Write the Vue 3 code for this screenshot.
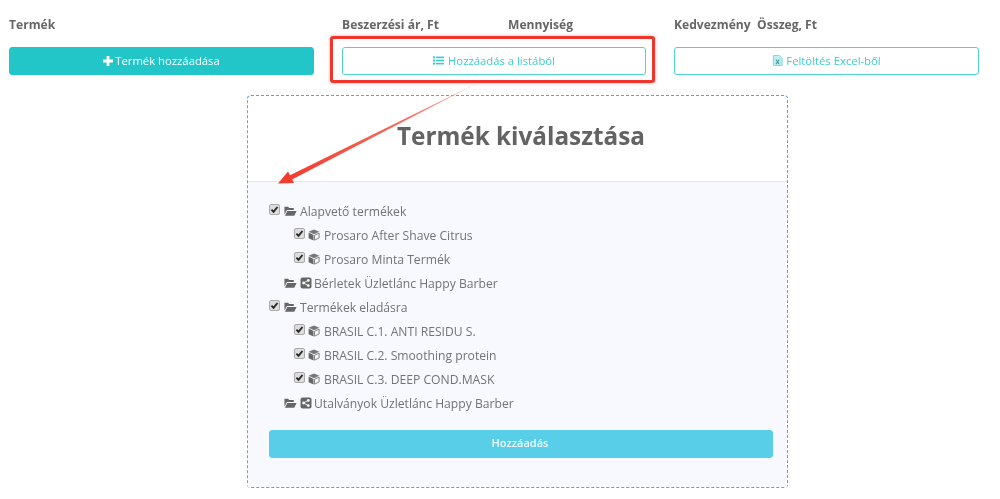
<template>
  <div class="page">
    <div class="columns">
      <div class="col col-product">
        <div class="col-title">Termék</div>
        <button class="btn btn-solid">
          <svg class="ico ico-plus" viewBox="1 1 10 10"><path d="M4.6 1h2.8v3.6H11v2.8H7.4V11H4.6V7.4H1V4.6h3.6z" fill="currentColor" /></svg>
          Termék hozzáadása
        </button>
      </div>
      <div class="col col-list">
        <div class="col-titles">
          <span class="col-title price">Beszerzési ár, Ft</span>
          <span class="col-title">Mennyiség</span>
        </div>
        <div class="highlight">
          <button class="btn btn-outline btn-list">
            <svg class="ico" viewBox="0 0 12 12" fill="currentColor">
              <rect x="0" y="1.5" width="2.2" height="2.2" /><rect x="3.2" y="1.7" width="8.8" height="1.8" />
              <rect x="0" y="4.9" width="2.2" height="2.2" /><rect x="3.2" y="5.1" width="8.8" height="1.8" />
              <rect x="0" y="8.3" width="2.2" height="2.2" /><rect x="3.2" y="8.5" width="8.8" height="1.8" />
            </svg>
            Hozzáadás a listából
          </button>
        </div>
      </div>
      <div class="col col-excel">
        <div class="col-titles">
          <span class="col-title discount">Kedvezmény</span>
          <span class="col-title">Összeg, Ft</span>
        </div>
        <button class="btn btn-outline">
          <svg class="ico" viewBox="1 0 11 12">
            <path d="M2 .5h6.5L11.5 3.5v8H2z" fill="#c4eeee" stroke="#6fd8da" stroke-width="1" />
            <path d="M4.8 5l3.6 5M8.4 5L4.8 10" stroke="#3f9f9f" stroke-width="1.1" fill="none" />
          </svg>
          Feltöltés Excel-ből
        </button>
      </div>
    </div>

    <div class="dialog">
      <h1 class="dialog-title">Termék kiválasztása</h1>
      <div class="dialog-body">
        <ul class="tree">
          <li
            v-for="row in rows"
            :key="row.label"
            class="tree-row"
            :class="'level-' + row.level"
          >
            <span v-if="row.checked" class="check">
              <svg viewBox="0 0 10 10"><path d="M1.6 5.2l2.3 2.4 4.4-5.4" fill="none" stroke="#222" stroke-width="2" /></svg>
            </span>
            <svg v-if="row.type === 'group' || row.type === 'share'" class="folder" viewBox="0 0 14 12">
              <path d="M0.5 10V1.5h4l1 1.3h5V5H3L0.5 10z" fill="#666" />
              <path d="M3.6 6h10l-2.6 5H1z" fill="#666" />
            </svg>
            <svg v-if="row.type === 'share'" class="share" viewBox="0 0 12 12">
              <rect x="0.5" y="0.5" width="11" height="11" rx="2" fill="#666" />
              <circle cx="8.3" cy="3.4" r="1.4" fill="#f8f9fe" /><circle cx="8.3" cy="8.6" r="1.4" fill="#f8f9fe" /><circle cx="3.6" cy="6" r="1.4" fill="#f8f9fe" />
              <path d="M8.3 3.4L3.6 6l4.7 2.6" fill="none" stroke="#f8f9fe" stroke-width="0.9" />
            </svg>
            <svg v-if="row.type === 'item'" class="cube" viewBox="0 0 12 12">
              <path d="M6 .4l5.4 2.4L6 5.2.6 2.8z" fill="#777" />
              <path d="M.6 3.6l4.9 2.3v5.7L.6 9.2z" fill="#666" />
              <path d="M6.5 6.3l4.6-2.2v4.9l-4.6 2.2z" fill="#f4f5f9" stroke="#777" stroke-width="0.9" />
            </svg>
            <span class="label">{{ row.label }}</span>
          </li>
        </ul>
        <button class="btn btn-add">Hozzáadás</button>
      </div>
    </div>

    <svg class="arrow" viewBox="0 0 1000 499">
      <defs>
        <linearGradient id="arrowFade" gradientUnits="userSpaceOnUse" x1="477" y1="83" x2="290" y2="177">
          <stop offset="0" stop-color="#f9b4ac" />
          <stop offset="0.35" stop-color="#f66f62" />
          <stop offset="1" stop-color="#f33c2e" />
        </linearGradient>
      </defs>
      <path d="M477 83.2L289.5 175.5L292 179.5z" fill="url(#arrowFade)" />
      <path d="M278 183.5L288 171.5L294 183z" fill="#f33c2e" />
    </svg>
  </div>
</template>

<script setup>
const rows = [
  { label: 'Alapvető termékek', level: 0, type: 'group', checked: true },
  { label: 'Prosaro After Shave Citrus', level: 1, type: 'item', checked: true },
  { label: 'Prosaro Minta Termék', level: 1, type: 'item', checked: true },
  { label: 'Bérletek Üzletlánc Happy Barber', level: 2, type: 'share', checked: false },
  { label: 'Termékek eladásra', level: 0, type: 'group', checked: true },
  { label: 'BRASIL C.1. ANTI RESIDU S.', level: 1, type: 'item', checked: true },
  { label: 'BRASIL C.2. Smoothing protein', level: 1, type: 'item', checked: true },
  { label: 'BRASIL C.3. DEEP COND.MASK', level: 1, type: 'item', checked: true },
  { label: 'Utalványok Üzletlánc Happy Barber', level: 2, type: 'share', checked: false }
]
</script>

<style>
html, body {
  margin: 0;
  background: #fff;
  overflow: hidden;
}
</style>

<style scoped>
.page {
  position: relative;
  width: 1000px;
  height: 499px;
  overflow: hidden;
  font-family: "Open Sans", sans-serif;
  color: #666;
  filter: blur(0.35px);
}

.columns {
  display: flex;
  padding: 18px 0 0 9px;
  height: 78px;
  box-sizing: border-box;
}

.col {
  display: flex;
  flex-direction: column;
}

.col-product {
  width: 305px;
  margin-right: 28px;
}

.col-list {
  width: 304px;
  margin-right: 28px;
}

.col-excel {
  width: 305px;
}

.col-title {
  font-size: 12.1px;
  font-weight: 700;
  line-height: 14px;
  color: #666;
}

.col-product .col-title {
  margin-bottom: 15px;
}

.col-titles {
  display: flex;
  margin-bottom: 15px;
}

.price {
  width: 166px;
}

.discount {
  width: 83px;
}

.btn {
  display: flex;
  align-items: center;
  justify-content: center;
  gap: 3px;
  width: 100%;
  height: 28px;
  padding: 0 0 1px;
  border-radius: 3px;
  font-family: inherit;
  font-size: 11.3px;
  box-sizing: border-box;
}

.btn-solid {
  background: #22c6c9;
  border: 1px solid #22c6c9;
  color: #fff;
  gap: 2px;
}

.btn-outline {
  background: #fff;
  border: 1px solid #4fd2d4;
  color: #3fcbce;
}

.btn-list {
  gap: 4px;
}

.ico {
  width: 11px;
  height: 11px;
}

.ico-plus {
  width: 10px;
  height: 10px;
}

.highlight {
  margin: -11px -9px 0 -12px;
  padding: 8px 6px 5px 9px;
  border: 3px solid #f0352b;
  border-radius: 3px;
  box-shadow: 0 0 3px rgba(240, 53, 43, 0.5);
}

.dialog {
  width: 541px;
  height: 393px;
  margin: 17px 0 0 247px;
  border: 1px dashed #4da3f8;
  border-radius: 4px;
  box-sizing: border-box;
  display: flex;
  flex-direction: column;
}

.dialog-title {
  margin: 0;
  height: 86px;
  box-sizing: border-box;
  padding: 23px 0 0 7px;
  border-bottom: 1px solid #e4e7ee;
  text-align: center;
  font-size: 24.3px;
  line-height: 34px;
  font-weight: 700;
  color: #636363;
}

.dialog-body {
  flex: 1;
  background: #f8f9fe;
  padding: 17px 14px 0 21px;
}

.tree {
  list-style: none;
  margin: 0 0 15px;
  padding: 0;
}

.tree-row {
  display: flex;
  align-items: center;
  height: 24px;
  font-size: 12.15px;
  color: #737373;
}

.level-1 {
  padding-left: 25px;
}

.level-2 {
  padding-left: 15px;
}

.check {
  display: flex;
  width: 11px;
  height: 11px;
  margin-right: 4px;
  margin-top: -3px;
  background: #ddd;
  border: 1px solid #aaa;
  border-radius: 2px;
  box-sizing: border-box;
}

.folder {
  width: 13px;
  height: 12px;
  margin-right: 3px;
}

.share {
  width: 12px;
  height: 12px;
  margin-right: 2px;
}

.cube {
  width: 12px;
  height: 12px;
  margin-right: 4px;
  margin-left: -1px;
}

.btn-add {
  width: 504px;
  height: 28px;
  padding: 0 2px 3px 0;
  background: #58cee8;
  border: 1px solid #58cee8;
  color: #f3fbfe;
  font-weight: 600;
  font-size: 11px;
}

.arrow {
  position: absolute;
  left: 0;
  top: 0;
  width: 1000px;
  height: 499px;
  pointer-events: none;
}
</style>
